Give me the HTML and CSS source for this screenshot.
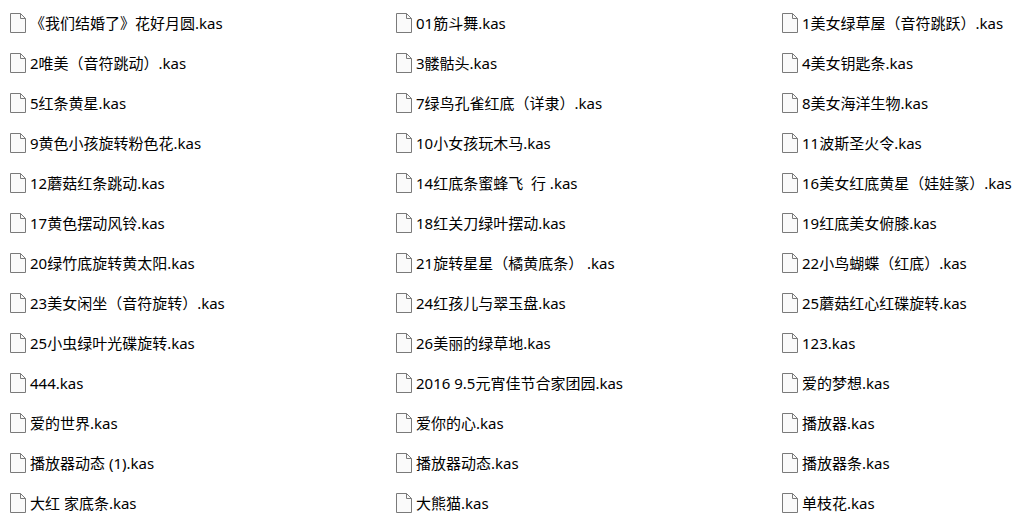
FILE: index.html
```html
<!DOCTYPE html>
<html lang="zh-CN">
<head>
    <meta charset="utf-8">
    <title>kas</title>
    <link rel="stylesheet" href="styles.css">
</head>
<body>
    <svg class="defs" width="0" height="0" aria-hidden="true">
        <symbol id="file" viewBox="0 0 16 20">
            <path d="M.5.5H10.5L15.5 5.5V19.5H.5Z" fill="#fafafa" stroke="#7a7a7a"/>
            <path d="M10.5.5V5.5H15.5" fill="none" stroke="#7a7a7a"/>
        </symbol>
    </svg>

    <ul class="file-list">
        <li class="file"><svg class="icon"><use href="#file"/></svg><span class="name">《我们结婚了》花好月圆.kas</span></li>
        <li class="file"><svg class="icon"><use href="#file"/></svg><span class="name">01筋斗舞.kas</span></li>
        <li class="file"><svg class="icon"><use href="#file"/></svg><span class="name">1美女绿草屋（音符跳跃）.kas</span></li>

        <li class="file"><svg class="icon"><use href="#file"/></svg><span class="name">2唯美（音符跳动）.kas</span></li>
        <li class="file"><svg class="icon"><use href="#file"/></svg><span class="name">3髅骷头.kas</span></li>
        <li class="file"><svg class="icon"><use href="#file"/></svg><span class="name">4美女钥匙条.kas</span></li>

        <li class="file"><svg class="icon"><use href="#file"/></svg><span class="name">5红条黄星.kas</span></li>
        <li class="file"><svg class="icon"><use href="#file"/></svg><span class="name">7绿鸟孔雀红底（详隶）.kas</span></li>
        <li class="file"><svg class="icon"><use href="#file"/></svg><span class="name">8美女海洋生物.kas</span></li>

        <li class="file"><svg class="icon"><use href="#file"/></svg><span class="name">9黄色小孩旋转粉色花.kas</span></li>
        <li class="file"><svg class="icon"><use href="#file"/></svg><span class="name">10小女孩玩木马.kas</span></li>
        <li class="file"><svg class="icon"><use href="#file"/></svg><span class="name">11波斯圣火令.kas</span></li>

        <li class="file"><svg class="icon"><use href="#file"/></svg><span class="name">12蘑菇红条跳动.kas</span></li>
        <li class="file"><svg class="icon"><use href="#file"/></svg><span class="name">14红底条蜜蜂飞  行 .kas</span></li>
        <li class="file"><svg class="icon"><use href="#file"/></svg><span class="name">16美女红底黄星（娃娃篆）.kas</span></li>

        <li class="file"><svg class="icon"><use href="#file"/></svg><span class="name">17黄色摆动风铃.kas</span></li>
        <li class="file"><svg class="icon"><use href="#file"/></svg><span class="name">18红关刀绿叶摆动.kas</span></li>
        <li class="file"><svg class="icon"><use href="#file"/></svg><span class="name">19红底美女俯膝.kas</span></li>

        <li class="file"><svg class="icon"><use href="#file"/></svg><span class="name">20绿竹底旋转黄太阳.kas</span></li>
        <li class="file"><svg class="icon"><use href="#file"/></svg><span class="name">21旋转星星（橘黄底条） .kas</span></li>
        <li class="file"><svg class="icon"><use href="#file"/></svg><span class="name">22小鸟蝴蝶（红底）.kas</span></li>

        <li class="file"><svg class="icon"><use href="#file"/></svg><span class="name">23美女闲坐（音符旋转）.kas</span></li>
        <li class="file"><svg class="icon"><use href="#file"/></svg><span class="name">24红孩儿与翠玉盘.kas</span></li>
        <li class="file"><svg class="icon"><use href="#file"/></svg><span class="name">25蘑菇红心红碟旋转.kas</span></li>

        <li class="file"><svg class="icon"><use href="#file"/></svg><span class="name">25小虫绿叶光碟旋转.kas</span></li>
        <li class="file"><svg class="icon"><use href="#file"/></svg><span class="name">26美丽的绿草地.kas</span></li>
        <li class="file"><svg class="icon"><use href="#file"/></svg><span class="name">123.kas</span></li>

        <li class="file"><svg class="icon"><use href="#file"/></svg><span class="name">444.kas</span></li>
        <li class="file"><svg class="icon"><use href="#file"/></svg><span class="name">2016 9.5元宵佳节合家团园.kas</span></li>
        <li class="file"><svg class="icon"><use href="#file"/></svg><span class="name">爱的梦想.kas</span></li>

        <li class="file"><svg class="icon"><use href="#file"/></svg><span class="name">爱的世界.kas</span></li>
        <li class="file"><svg class="icon"><use href="#file"/></svg><span class="name">爱你的心.kas</span></li>
        <li class="file"><svg class="icon"><use href="#file"/></svg><span class="name">播放器.kas</span></li>

        <li class="file"><svg class="icon"><use href="#file"/></svg><span class="name">播放器动态 (1).kas</span></li>
        <li class="file"><svg class="icon"><use href="#file"/></svg><span class="name">播放器动态.kas</span></li>
        <li class="file"><svg class="icon"><use href="#file"/></svg><span class="name">播放器条.kas</span></li>

        <li class="file"><svg class="icon"><use href="#file"/></svg><span class="name">大红 家底条.kas</span></li>
        <li class="file"><svg class="icon"><use href="#file"/></svg><span class="name">大熊猫.kas</span></li>
        <li class="file"><svg class="icon"><use href="#file"/></svg><span class="name">单枝花.kas</span></li>
    </ul>
</body>
</html>
```
FILE: styles.css
```css
* {
    box-sizing: border-box;
    margin: 0;
    padding: 0;
}

body {
    font-family: "Noto Sans", "Noto Sans CJK SC", sans-serif;
    font-size: 15px;
    line-height: 20px;
    color: #000;
    background: #fff;
}

.defs {
    display: block;
}

.file-list {
    display: grid;
    grid-template-columns: repeat(3, minmax(0, 1fr));
    grid-auto-rows: 40px;
    column-gap: 145px;
    padding: 3px 10px 0;
    list-style: none;
}

.file {
    display: flex;
    align-items: center;
    gap: 4px;
}

.icon {
    flex: none;
    width: 16px;
    height: 20px;
}

.name {
    white-space: pre;
}
```
